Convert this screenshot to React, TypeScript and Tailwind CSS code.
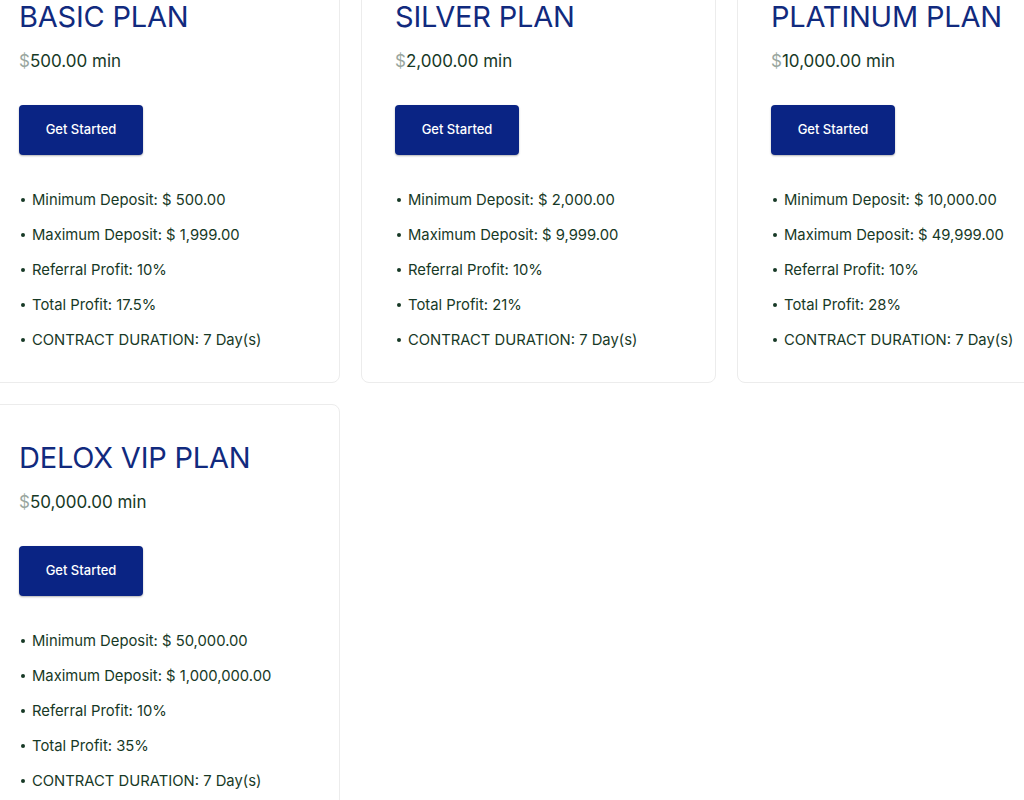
import React from "react";

type Plan = {
  name: string;
  min: string;
  minDep: string;
  maxDep: string;
  total: string;
};

const plans: Plan[] = [
  { name: "BASIC PLAN", min: "500.00", minDep: "500.00", maxDep: "1,999.00", total: "17.5%" },
  { name: "SILVER PLAN", min: "2,000.00", minDep: "2,000.00", maxDep: "9,999.00", total: "21%" },
  { name: "PLATINUM PLAN", min: "10,000.00", minDep: "10,000.00", maxDep: "49,999.00", total: "28%" },
  { name: "DELOX VIP PLAN", min: "50,000.00", minDep: "50,000.00", maxDep: "1,000,000.00", total: "35%" },
];

function PlanCard({ plan }: { plan: Plan }) {
  const items = [
    `Minimum Deposit: $ ${plan.minDep}`,
    `Maximum Deposit: $ ${plan.maxDep}`,
    "Referral Profit: 10%",
    `Total Profit: ${plan.total}`,
    "CONTRACT DURATION: 7 Day(s)",
  ];
  return (
    <div className="border border-[#ececec] rounded-lg bg-white pl-[33px] pr-4 pt-[35px] pb-[30px] h-[420px]">
      <h2 className="text-[29px] leading-[36px] text-[#112a7e] font-normal tracking-[-0.2px] whitespace-nowrap">
        {plan.name}
      </h2>
      <p className="mt-[14px] text-[17px] leading-6 text-[#173926]">
        <span className="text-[#9aa79f]">$</span>
        {plan.min} min
      </p>
      <button className="mt-[32px] w-[124px] h-[50px] rounded bg-[#0a2484] text-white text-[13px] font-medium shadow-[0_1px_2px_rgba(0,0,0,0.3)]">
        Get Started
      </button>
      <ul className="mt-[33px] flex flex-col gap-[11px]">
        {items.map((t) => (
          <li key={t} className="flex items-center text-[14.8px] leading-6 text-[#173926] whitespace-nowrap">
            <span className="w-[4px] h-[4px] rounded-full bg-[#173926] ml-[2px] mr-[7px]" />
            {t}
          </li>
        ))}
      </ul>
    </div>
  );
}

export default function App() {
  return (
    <div className="w-[1024px] h-[800px] overflow-hidden bg-white font-['Inter',sans-serif]">
      <div className="grid grid-cols-[355px_355px_355px] gap-x-[21px] gap-y-[21px] -ml-[15px] -mt-[37px]">
        {plans.map((p) => (
          <PlanCard key={p.name} plan={p} />
        ))}
      </div>
    </div>
  );
}
